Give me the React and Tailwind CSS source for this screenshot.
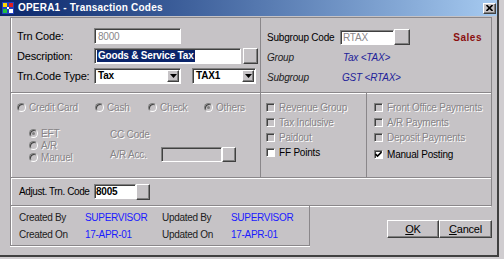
import React from "react";

const BG = "bg-[#c6c3c6]";
const sunken =
  "border border-t-[#808080] border-l-[#808080] border-b-white border-r-white shadow-[inset_1px_1px_0_#404040]";
const raised =
  "bg-[#c6c3c6] border border-t-white border-l-white border-b-[#404040] border-r-[#404040] shadow-[inset_-1px_-1px_0_#808080]";
const dis = "text-[#878487] [text-shadow:1px_1px_0_#ffffff]";

function Radio({ checked, label }) {
  return (
    <div className="flex items-center gap-[3px] h-[12px]">
      <span
        className={`w-[9px] h-[9px] shrink-0 rounded-full ${BG} border border-t-[#808080] border-l-[#808080] border-b-white border-r-white shadow-[inset_1px_1px_0_#404040] flex items-center justify-center`}
      >
        {checked && <span className="w-[3px] h-[3px] rounded-full bg-[#808080]" />}
      </span>
      <span className={dis}>{label}</span>
    </div>
  );
}

function Check({ label, disabled, checked }) {
  return (
    <div className="flex items-center gap-[4px] h-[15px]">
      <span
        className={`w-[9px] h-[9px] shrink-0 ${disabled ? BG : "bg-white"} ${sunken} flex items-center justify-center`}
      >
        {checked && (
          <svg width="7" height="7" viewBox="0 0 7 7">
            <path d="M0.5 3 L2.5 5 L6.5 1" stroke="#000" strokeWidth="1.6" fill="none" />
          </svg>
        )}
      </span>
      <span className={disabled ? dis : "text-black"}>{label}</span>
    </div>
  );
}

function SmallBtn({ w = "w-[15px]", h = "h-[16px]" }) {
  return <div className={`${raised} ${w} ${h} shrink-0`} />;
}

function Select({ value, w }) {
  return (
    <div className={`${sunken} bg-white ${w} h-[16px] flex items-center justify-between pl-[3px] pr-[1px] shrink-0`}>
      <span className="font-bold text-[10px] leading-none">{value}</span>
      <div className={`${raised} w-[12px] h-[12px] flex items-center justify-center`}>
        <svg width="7" height="4" viewBox="0 0 7 4">
          <path d="M0 0 H7 L3.5 4 Z" fill="#000" />
        </svg>
      </div>
    </div>
  );
}

const etchB = "border-b border-b-[#8a878a] shadow-[0_1px_0_#ffffff]";
const etchR = "border-r border-r-[#8a878a]";

export default function App() {
  return (
    <div className="w-[504px] h-[259px] bg-[#d0cdd0] font-['Liberation_Sans',Arial,sans-serif] text-[10px] tracking-[-0.2px] whitespace-nowrap text-black overflow-hidden">
      <div className={`w-[499px] h-[257px] ${BG} border-r-2 border-b-2 border-r-[#404040] border-b-[#404040] flex flex-col`}>
        {/* title bar */}
        <div className="h-[16px] w-full bg-gradient-to-r from-[#0a246a] to-[#a6caf0] flex items-center shrink-0">
          <svg width="12" height="12" viewBox="0 0 12 12" className="ml-[2px]">
            <rect x="0" y="0" width="12" height="12" fill="#2040c0" />
            <rect x="1" y="1" width="4" height="4" fill="#ffd800" />
            <rect x="7" y="1" width="4" height="4" fill="#e02020" />
            <rect x="1" y="7" width="4" height="4" fill="#20c040" />
            <rect x="7" y="7" width="4" height="4" fill="#ffffff" />
            <rect x="5" y="5" width="2" height="2" fill="#ffffff" />
          </svg>
          <span className="ml-[4px] text-white font-bold text-[10px] leading-none tracking-[0.2px]">
            OPERA1 - Transaction Codes
          </span>
          <div className={`ml-auto mr-[1px] ${raised} w-[13px] h-[11px] flex items-center justify-center`}>
            <svg width="7" height="6" viewBox="0 0 7 6">
              <path d="M0.5 0 L6.5 6 M6.5 0 L0.5 6" stroke="#000" strokeWidth="1.6" />
            </svg>
          </div>
        </div>

        {/* main panel */}
        <div className="ml-[10px] mt-[1px] w-[482px] border-t border-x border-[#8a878a] shadow-[inset_1px_0_0_#fff]">
          {/* row 1 */}
          <div className={`h-[75px] flex ${etchB}`}>
            <div className={`w-[250px] ${etchR} pl-[6px] pt-[10px] flex flex-col gap-[4px]`}>
              <div className="flex items-center h-[16px]">
                <span className="w-[77px] text-[11px]">Trn Code:</span>
                <div className={`${sunken} bg-white w-[87px] h-[16px] flex items-center pl-[3px] text-[#8a878a] text-[10px]`}>8000</div>
              </div>
              <div className="flex items-center h-[16px]">
                <span className="w-[77px] text-[11px]">Description:</span>
                <div className={`${sunken} bg-white w-[147px] h-[16px] flex items-center pl-[2px]`}>
                  <span className="bg-[#0a246a] text-white font-bold text-[10px] leading-[12px] px-[1px]">Goods &amp; Service Tax</span>
                </div>
                <div className="ml-[2px]">
                  <SmallBtn w="w-[15px]" h="h-[16px]" />
                </div>
              </div>
              <div className="flex items-center h-[16px]">
                <span className="w-[77px] text-[11px]">Trn.Code Type:</span>
                <Select value="Tax" w="w-[87px]" />
                <div className="ml-[11px]">
                  <Select value="TAX1" w="w-[64px]" />
                </div>
              </div>
            </div>
            <div className="flex-1 pl-[6px] pr-[9px] pt-[11px] flex flex-col gap-[4px]">
              <div className="flex items-center h-[16px]">
                <span className="w-[73px]">Subgroup Code</span>
                <div className={`${sunken} bg-white w-[54px] h-[15px] flex items-center pl-[2px] text-[#8a878a] text-[10px]`}>RTAX</div>
                <SmallBtn w="w-[16px]" h="h-[16px]" />
                <span className="ml-auto text-[#8b1010] font-bold text-[10px] tracking-[0.5px]">Sales</span>
              </div>
              <div className="flex items-center h-[16px] italic">
                <span className="w-[76px] text-[#202020]">Group</span>
                <span className="text-[#22229a]">Tax &lt;TAX&gt;</span>
              </div>
              <div className="flex items-center h-[16px] italic">
                <span className="w-[75px] text-[#202020]">Subgroup</span>
                <span className="text-[#22229a]">GST &lt;RTAX&gt;</span>
              </div>
            </div>
          </div>

          {/* row 2 */}
          <div className={`h-[85px] flex ${etchB}`}>
            <div className={`w-[250px] ${etchR} pl-[6px] pt-[7px]`}>
              <div className="flex h-[14px] items-center">
                <div className="w-[78px]"><Radio label="Credit Card" /></div>
                <div className="w-[53px]"><Radio label="Cash" /></div>
                <div className="w-[56px]"><Radio label="Check" /></div>
                <Radio label="Others" checked />
              </div>
              <div className="flex mt-[13px]">
                <div className="w-[93px] pl-[12px] flex flex-col">
                  <Radio label="EFT" checked />
                  <Radio label="A/R" />
                  <Radio label="Manuel" />
                </div>
                <div className="flex flex-col">
                  <div className={`h-[14px] flex items-center ${dis}`}>CC Code</div>
                  <div className="flex items-center mt-[6px]">
                    <span className={`w-[51px] ${dis}`}>A/R Acc.</span>
                    <div className={`${sunken} ${BG} w-[61px] h-[15px]`} />
                    <SmallBtn w="w-[14px]" h="h-[15px]" />
                  </div>
                </div>
              </div>
            </div>
            <div className={`w-[106px] ${etchR} pl-[5px] pt-[7px] flex flex-col`}>
              <Check label="Revenue Group" disabled />
              <Check label="Tax Inclusive" disabled />
              <Check label="Paidout" disabled />
              <Check label="FF Points" />
            </div>
            <div className="flex-1 pl-[7px] pt-[7px] flex flex-col">
              <Check label="Front Office Payments" disabled />
              <Check label="A/R Payments" disabled />
              <Check label="Deposit Payments" disabled />
              <div className="mt-[2px]">
                <Check label="Manual Posting" checked />
              </div>
            </div>
          </div>

          {/* row 3 */}
          <div className={`h-[28px] flex items-center pl-[8px] ${etchB}`}>
            <span className="w-[75px] text-[10px] tracking-[-0.4px]">Adjust. Trn. Code</span>
            <div className={`${sunken} bg-white w-[42px] h-[15px] flex items-center pl-[1px] font-bold text-[10px]`}>8005</div>
            <SmallBtn w="w-[14px]" h="h-[16px]" />
          </div>
        </div>

        {/* bottom */}
        <div className="flex ml-[10px]">
          <div className="w-[300px] h-[40px] border-x border-b border-[#8a878a] shadow-[inset_1px_0_0_#fff,0_1px_0_#fff] pl-[8px] pt-[4px] flex flex-col gap-[3px] text-[10px] tracking-[-0.3px]">
            <div className="flex h-[14px] items-center">
              <span className="w-[66px] text-[#202020]">Created By</span>
              <span className="w-[77px] text-[#1a1aff]">SUPERVISOR</span>
              <span className="w-[69px] text-[#202020]">Updated By</span>
              <span className="text-[#1a1aff]">SUPERVISOR</span>
            </div>
            <div className="flex h-[14px] items-center">
              <span className="w-[66px] text-[#202020]">Created On</span>
              <span className="w-[77px] text-[#1a1aff]">17-APR-01</span>
              <span className="w-[69px] text-[#202020]">Updated On</span>
              <span className="text-[#1a1aff]">17-APR-01</span>
            </div>
          </div>
          <div className="ml-[77px] mt-[14px] flex h-[18px] text-[11px]">
            <div className={`${raised} w-[52px] h-[18px] flex items-center justify-center`}>
              <span><u>O</u>K</span>
            </div>
            <div className={`${raised} w-[53px] h-[18px] flex items-center justify-center`}>
              <span><u>C</u>ancel</span>
            </div>
          </div>
        </div>
      </div>
    </div>
  );
}
